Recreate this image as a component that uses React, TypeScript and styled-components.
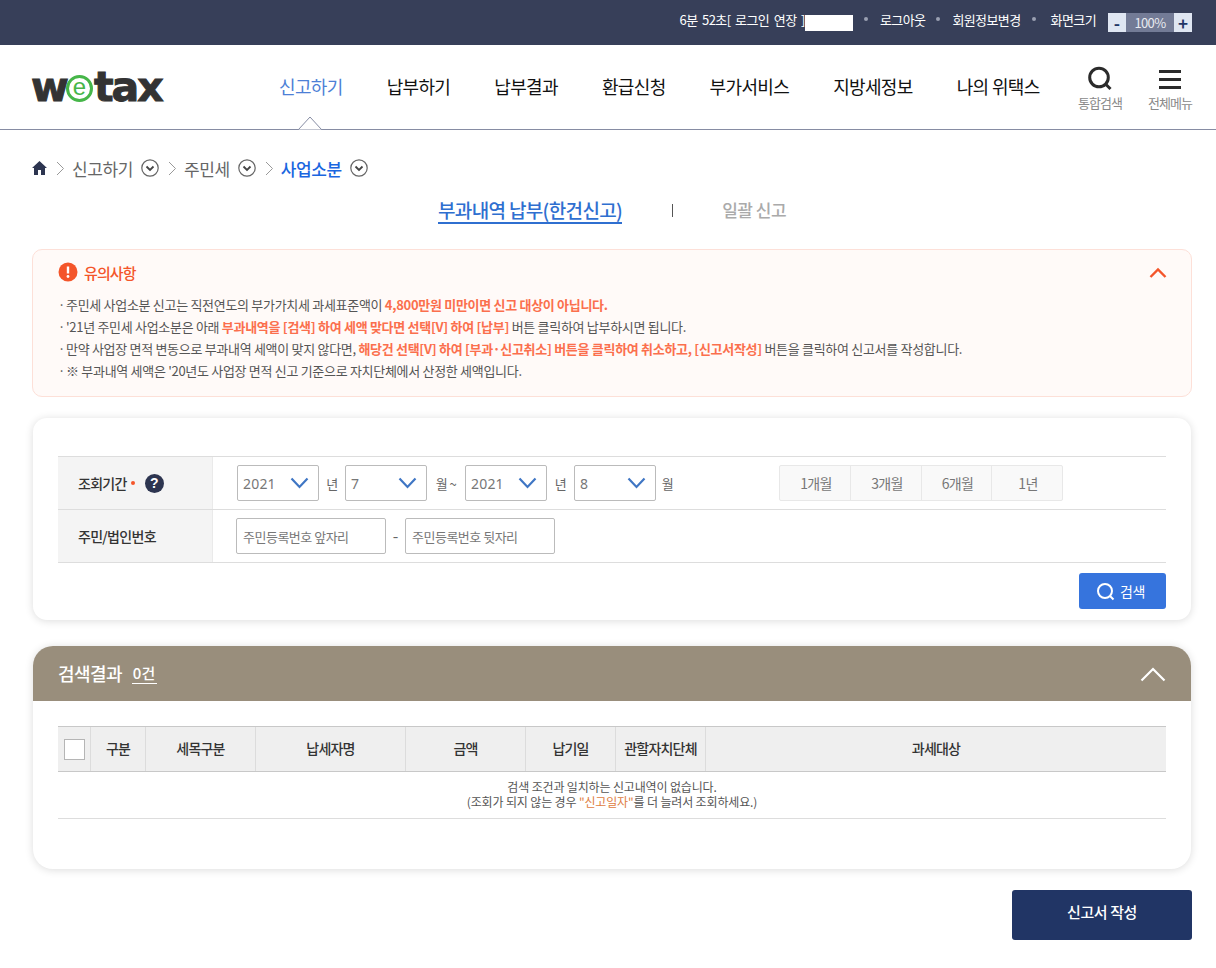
import React from 'react';
import styled, { createGlobalStyle } from 'styled-components';

const Global = createGlobalStyle`
  html, body { margin: 0; padding: 0; background: #fff; }
  body { font-family: "Noto Sans CJK KR", "Noto Sans", sans-serif; color: #333; }
  * { box-sizing: border-box; }
`;
const Page = styled.div`width: 1216px; height: 968px; overflow: hidden; background: #fff;`;
const TopBar = styled.div`
  height: 45px; background: #373f59; display: flex; align-items: center; justify-content: flex-end;
  padding: 0 24px 7px 0; color: #fff; font-size: 13px; letter-spacing: -0.6px;
`;
const TimerText = styled.span`white-space: nowrap; word-spacing: 2.3px;`;
const MaskBox = styled.span`width: 48px; height: 16px; background: #fff; margin-top: 8px;`;
const Dot = styled.span`width: 4px; height: 4px; border-radius: 50%; background: #9aa0b2; margin: 0 12px 0 11px;`;
const TopLink = styled.span<{ $shift?: boolean }>`white-space: nowrap; ${p => (p.$shift ? 'margin-left: 3px;' : '')}`;
const Zoom = styled.div`display: flex; height: 19px; margin: 7px 0 0 12px;`;
const ZoomBtn = styled.span`
  width: 18px; background: #dfe6f2; color: #1f3566; font-weight: 700; font-size: 17px; letter-spacing: 0;
  display: flex; align-items: center; justify-content: center; line-height: 18px;
`;
const ZoomVal = styled.span`
  width: 48px; background: #737b96; color: #e8eaf0; text-align: center; line-height: 19px; font-size: 13px;
`;
const Header = styled.header`
  position: relative; height: 85px; border-bottom: 1px solid #868ca3; display: flex; padding-left: 31px;
`;
const Logo = styled.div`
  display: flex; align-items: center; width: 248px; height: 84px; padding-bottom: 1px;
  font-family: "DejaVu Sans", sans-serif; font-weight: 700; font-size: 41px; letter-spacing: -2px; color: #333;
  -webkit-text-stroke: 1px #333;
`;
const LogoE = styled.span`
  width: 27px; height: 27px; border: 3px solid #46b649; border-radius: 50%; margin: 4px 1px 0 -1px;
  color: #46b649; font-family: "Liberation Sans", sans-serif; font-size: 24px; font-weight: 400; letter-spacing: 0;
  -webkit-text-stroke: 0; display: flex; align-items: center; justify-content: center; line-height: 1; padding-bottom: 3px; background: #fff;
`;
const Nav = styled.nav`display: flex; gap: 44px; height: 84px; align-items: center; padding-bottom: 3px;`;
const NavItem = styled.span<{ $on?: boolean }>`
  font-size: 18px; letter-spacing: -0.65px; color: ${p => (p.$on ? '#4d7fd6' : '#111')}; white-space: nowrap; font-weight: 400;
`;
const HeaderTool = styled.div<{ $x: number }>`
  position: absolute; top: 21px; left: ${p => p.$x}px; width: 60px; display: flex; flex-direction: column; align-items: center;
  font-size: 13px; letter-spacing: -0.9px; color: #8a8a8a; gap: 1px; white-space: nowrap;
`;
const Caret = styled.svg`position: absolute; left: 298px; bottom: -1px;`;
const Crumbs = styled.div`
  display: flex; align-items: center; padding-left: 32px; height: 24px; margin-top: 26px; font-size: 17px; letter-spacing: -0.4px; color: #666;
`;
const CrumbText = styled.span<{ $on?: boolean }>`
  color: ${p => (p.$on ? '#1a66e0' : '#666')}; font-weight: ${p => (p.$on ? 500 : 400)}; margin: 0 8px 0 0; white-space: nowrap;
`;
const Tabs = styled.div`display: flex; height: 28px; margin-top: 16px; position: relative;`;
const TabOn = styled.span`
  margin-left: 438px; font-size: 19px; letter-spacing: -0.65px; font-weight: 500; color: #2f6fd0; border-bottom: 2px solid #2f6fd0;
  line-height: 28px; height: 28px; white-space: nowrap;
`;
const TabSep = styled.span`width: 1px; height: 13px; background: #555; margin: 8px 0 0 50px;`;
const TabOff = styled.span`
  margin-left: 49px; font-size: 17px; letter-spacing: -0.5px; font-weight: 500; color: #aaa; line-height: 28px;
`;
const Notice = styled.section`
  margin: 25px 24px 0 32px; height: 148px; border: 1px solid #fde0d8; border-radius: 10px; background: #fffaf8;
  padding: 11px 24px 0 25px; position: relative;
`;
const NoticeHead = styled.div`
  display: flex; align-items: center; gap: 6px; color: #f4552a; font-size: 15px; font-weight: 500; letter-spacing: -0.9px; height: 22px;
`;
const NoticeList = styled.ul`margin: 11px 0 0; padding: 0; list-style: none;`;
const NoticeItem = styled.li`
  font-size: 13px; line-height: 22px; height: 22px; letter-spacing: -0.3px; color: #555; white-space: nowrap; display: flex;
  &::before { content: '·'; width: 8px; color: #555; }
  span { white-space: pre; }
`;
const Hot = styled.b`color: #fb6f4d; font-weight: 700; white-space: pre;`;
const NoticeChevron = styled.svg`position: absolute; right: 24px; top: 17px;`;
const Card = styled.section`
  margin: 21px 25px 0 33px; height: 202px; background: #fff; border-radius: 14px;
  box-shadow: 0 1px 8px rgba(0,0,0,.14); padding: 38px 25px 0;
`;
const FormRow = styled.div<{ $first?: boolean }>`
  display: flex; height: 53px; border-bottom: 1px solid #ddd;
  ${p => (p.$first ? 'border-top: 1px solid #ddd; height: 54px;' : '')}
`;
const FormLabel = styled.div`
  width: 155px; background: #f4f4f4; border-right: 1px solid #eaeaea; padding-left: 20px; display: flex; align-items: center;
  font-size: 14px; font-weight: 500; letter-spacing: -0.7px; color: #333; white-space: nowrap;
`;
const Req = styled.span`width: 4px; height: 4px; background: #f4552a; border-radius: 50%; margin: 0 10px 0 4px;`;
const Help = styled.span`
  width: 19px; height: 19px; border-radius: 50%; background: #2d3550; color: #fff; font-size: 14px; font-weight: 700;
  display: flex; align-items: center; justify-content: center; letter-spacing: 0; font-family: "Liberation Sans", sans-serif;
`;
const FormBody = styled.div`display: flex; align-items: center; flex: 1; padding-left: 24px; font-size: 13px; color: #666;`;
const Select = styled.div`
  width: 82px; height: 36px; border: 1px solid #bbb; border-radius: 2px; display: flex; align-items: center; justify-content: space-between;
  padding: 0 9px 0 5px; font-size: 14px; letter-spacing: 0.2px; color: #777; font-family: "Noto Sans", sans-serif; background: #fff;
`;
const Unit = styled.span<{ $w: number }>`width: ${p => p.$w}px; text-align: center; font-size: 13px; letter-spacing: -0.5px; white-space: nowrap;`;
const Periods = styled.div`display: flex; margin-left: 100px; height: 36px; border: 1px solid #e8e8e8; border-radius: 2px; background: #f9f9f9;`;
const Period = styled.span<{ $w: number; $last?: boolean }>`
  width: ${p => p.$w}px; display: flex; align-items: center; justify-content: center; font-size: 14px; letter-spacing: -0.6px; color: #777; padding-left: 2px;
  ${p => (p.$last ? '' : 'border-right: 1px solid #e8e8e8;')}
`;
const TextBox = styled.div`
  width: 150px; height: 36px; border: 1px solid #bbb; border-radius: 2px; display: flex; align-items: center; padding-left: 6px;
  font-size: 13px; letter-spacing: -0.5px; color: #777; white-space: nowrap;
  &:first-child { margin-left: -1px; }
`;
const Dash = styled.span`width: 19px; text-align: center; font-size: 16px; margin-bottom: 3px;`;
const BtnRow = styled.div`display: flex; justify-content: flex-end; margin-top: 10px;`;
const SearchBtn = styled.div`
  width: 87px; height: 36px; background: #3674dd; border-radius: 3px; color: #fff; display: flex; align-items: center; justify-content: center;
  gap: 5px; font-size: 14px; letter-spacing: -0.4px; padding-right: 4px;
`;
const ResultCard = styled.section`
  margin: 26px 25px 0 33px; height: 223px; background: #fff; border-radius: 20px; box-shadow: 0 1px 8px rgba(0,0,0,.14); overflow: hidden;
`;
const ResultHead = styled.div`
  height: 55px; background: #998e7c; display: flex; align-items: center; padding: 0 25px 2px; color: #fff; position: relative;
`;
const ResultTitle = styled.span`font-size: 18px; font-weight: 500; letter-spacing: -0.6px;`;
const ResultCount = styled.span`
  margin-left: 10px; font-size: 15px; font-weight: 500; border-bottom: 1px solid #fff; line-height: 20px; padding: 0 1px; letter-spacing: 0.2px; margin-top: 1px;
`;
const HeadChevron = styled.svg`position: absolute; right: 25px; top: 21px;`;
const TableWrap = styled.div`margin: 25px 25px 0;`;
const Thead = styled.div`
  display: flex; height: 46px; background: #efefef; border-top: 1px solid #c8c8c8; border-bottom: 1px solid #c8c8c8;
`;
const Th = styled.div<{ $w?: number }>`
  ${p => (p.$w ? `width: ${p.$w}px;` : 'flex: 1;')}
  border-right: 1px solid #dcdcdc; display: flex; align-items: center; justify-content: center; padding-bottom: 2px;
  font-size: 14px; font-weight: 500; letter-spacing: -0.8px; color: #333; white-space: nowrap;
  &:last-child { border-right: 0; }
`;
const Check = styled.span`width: 21px; height: 21px; background: #fff; border: 1px solid #b5b5b5; margin-top: 2px;`;
const EmptyRow = styled.div`
  height: 47px; border-bottom: 1px solid #ddd; text-align: center; padding-top: 7px; font-size: 12px; line-height: 15px; letter-spacing: -0.15px; color: #555;
`;
const Orange = styled.span`color: #e0803f;`;
const Footer = styled.div`display: flex; justify-content: flex-end; margin: 21px 24px 0 0;`;
const SubmitBtn = styled.div`
  width: 180px; height: 50px; background: #213565; border-radius: 3px; color: #fff; display: flex; align-items: center; justify-content: center;
  font-size: 15px; font-weight: 500; letter-spacing: -0.4px; padding-bottom: 7px;
`;

const Sep = () => (
  <svg width="9" height="15" viewBox="0 0 9 15" style={{ margin: '0 7px 0 9px', flex: 'none' }}>
    <path d="M1 1l6.5 6.5L1 14" fill="none" stroke="#999" strokeWidth="1" />
  </svg>
);
const Circle = () => (
  <svg width="18" height="18" viewBox="0 0 18 18" style={{ flex: 'none' }}>
    <circle cx="9" cy="9" r="8.2" fill="none" stroke="#666" strokeWidth="1.2" />
    <path d="M5.5 7.5L9 11l3.5-3.5" fill="none" stroke="#444" strokeWidth="1.8" />
  </svg>
);
const Chev = () => (
  <svg width="19" height="12" viewBox="0 0 19 12" style={{ flex: 'none' }}>
    <path d="M1.5 1.5L9.5 10l8-8.5" fill="none" stroke="#3f76c4" strokeWidth="2.2" />
  </svg>
);

export default function App() {
  return (
    <Page>
      <Global />
      <TopBar>
        <TimerText>6분 52초[ 로그인 연장 ]</TimerText>
        <MaskBox />
        <Dot />
        <TopLink>로그아웃</TopLink>
        <Dot />
        <TopLink>회원정보변경</TopLink>
        <Dot />
        <TopLink $shift>화면크기</TopLink>
        <Zoom>
          <ZoomBtn>-</ZoomBtn>
          <ZoomVal>100%</ZoomVal>
          <ZoomBtn>+</ZoomBtn>
        </Zoom>
      </TopBar>
      <Header>
        <Logo>w<LogoE>e</LogoE>tax</Logo>
        <Nav>
          <NavItem $on>신고하기</NavItem>
          <NavItem>납부하기</NavItem>
          <NavItem>납부결과</NavItem>
          <NavItem>환급신청</NavItem>
          <NavItem>부가서비스</NavItem>
          <NavItem>지방세정보</NavItem>
          <NavItem>나의 위택스</NavItem>
        </Nav>
        <HeaderTool $x={1070}>
          <svg width="26" height="26" viewBox="0 0 26 26">
            <circle cx="12" cy="11.5" r="9.3" fill="none" stroke="#2b2b2b" strokeWidth="3" />
            <path d="M18.5 18l5 5" stroke="#2b2b2b" strokeWidth="3" />
          </svg>
          통합검색
        </HeaderTool>
        <HeaderTool $x={1140}>
          <svg width="26" height="26" viewBox="0 0 26 26">
            <path d="M2 5.5h22M2 13.5h22M2 21.5h22" stroke="#2b2b2b" strokeWidth="3" />
          </svg>
          전체메뉴
        </HeaderTool>
        <Caret width="24" height="14" viewBox="0 0 24 14">
          <path d="M0 13.5h0.5L12 1l11.5 12.5H24" fill="#fff" stroke="#868ca3" strokeWidth="1" />
        </Caret>
      </Header>
      <Crumbs>
        <svg width="15" height="14" viewBox="0 0 15 14" style={{ flex: 'none' }}>
          <path d="M7.5 0L0 7h2v7h4V9h3v5h4V7h2z" fill="#2d3550" />
        </svg>
        <Sep />
        <CrumbText>신고하기</CrumbText>
        <Circle />
        <Sep />
        <CrumbText>주민세</CrumbText>
        <Circle />
        <Sep />
        <CrumbText $on>사업소분</CrumbText>
        <Circle />
      </Crumbs>
      <Tabs>
        <TabOn>부과내역 납부(한건신고)</TabOn>
        <TabSep />
        <TabOff>일괄 신고</TabOff>
      </Tabs>
      <Notice>
        <NoticeHead>
          <svg width="20" height="20" viewBox="0 0 20 20">
            <circle cx="10" cy="10" r="9.5" fill="#f4552a" />
            <path d="M10 4.5v7" stroke="#fff" strokeWidth="2.4" />
            <circle cx="10" cy="14.5" r="1.4" fill="#fff" />
          </svg>
          유의사항
        </NoticeHead>
        <NoticeChevron width="18" height="12" viewBox="0 0 18 12">
          <path d="M1.5 10L9 2.5l7.5 7.5" fill="none" stroke="#f4552a" strokeWidth="2.4" />
        </NoticeChevron>
        <NoticeList>
          <NoticeItem><span>주민세 사업소분 신고는 직전연도의 부가가치세 과세표준액이 </span><Hot>4,800만원 미만이면 신고 대상이 아닙니다.</Hot></NoticeItem>
          <NoticeItem><span>'21년 주민세 사업소분은 아래 </span><Hot>부과내역을 [검색] 하여 세액 맞다면 선택[V] 하여 [납부]</Hot><span> 버튼 클릭하여 납부하시면 됩니다.</span></NoticeItem>
          <NoticeItem><span>만약 사업장 면적 변동으로 부과내역 세액이 맞지 않다면, </span><Hot>해당건 선택[V] 하여 [부과·신고취소] 버튼을 클릭하여 취소하고, [신고서작성]</Hot><span> 버튼을 클릭하여 신고서를 작성합니다.</span></NoticeItem>
          <NoticeItem><span>※ 부과내역 세액은 '20년도 사업장 면적 신고 기준으로 자치단체에서 산정한 세액입니다.</span></NoticeItem>
        </NoticeList>
      </Notice>
      <Card>
        <FormRow $first>
          <FormLabel>조회기간<Req /><Help>?</Help></FormLabel>
          <FormBody>
            <Select>2021<Chev /></Select>
            <Unit $w={26}>년</Unit>
            <Select>7<Chev /></Select>
            <Unit $w={38}>월 ~</Unit>
            <Select>2021<Chev /></Select>
            <Unit $w={27}>년</Unit>
            <Select>8<Chev /></Select>
            <Unit $w={23}>월</Unit>
            <Periods>
              <Period $w={71}>1개월</Period>
              <Period $w={71}>3개월</Period>
              <Period $w={70}>6개월</Period>
              <Period $w={70} $last>1년</Period>
            </Periods>
          </FormBody>
        </FormRow>
        <FormRow>
          <FormLabel>주민/법인번호</FormLabel>
          <FormBody>
            <TextBox>주민등록번호 앞자리</TextBox>
            <Dash>-</Dash>
            <TextBox>주민등록번호 뒷자리</TextBox>
          </FormBody>
        </FormRow>
        <BtnRow>
          <SearchBtn>
            <svg width="19" height="19" viewBox="0 0 19 19">
              <circle cx="9" cy="9" r="7" fill="none" stroke="#fff" strokeWidth="2" />
              <path d="M14 14l3.5 3.5" stroke="#fff" strokeWidth="2" />
            </svg>
            검색
          </SearchBtn>
        </BtnRow>
      </Card>
      <ResultCard>
        <ResultHead>
          <ResultTitle>검색결과</ResultTitle>
          <ResultCount>0건</ResultCount>
          <HeadChevron width="26" height="15" viewBox="0 0 26 15">
            <path d="M1.5 13.5L13 2l11.5 11.5" fill="none" stroke="#fff" strokeWidth="2.2" />
          </HeadChevron>
        </ResultHead>
        <TableWrap>
          <Thead>
            <Th $w={33}><Check /></Th>
            <Th $w={55}>구분</Th>
            <Th $w={110}>세목구분</Th>
            <Th $w={150}>납세자명</Th>
            <Th $w={120}>금액</Th>
            <Th $w={90}>납기일</Th>
            <Th $w={90}>관할자치단체</Th>
            <Th>과세대상</Th>
          </Thead>
          <EmptyRow>
            검색 조건과 일치하는 신고내역이 없습니다.<br />
            (조회가 되지 않는 경우 <Orange>"신고일자"</Orange>를 더 늘려서 조회하세요.)
          </EmptyRow>
        </TableWrap>
      </ResultCard>
      <Footer><SubmitBtn>신고서 작성</SubmitBtn></Footer>
    </Page>
  );
}
